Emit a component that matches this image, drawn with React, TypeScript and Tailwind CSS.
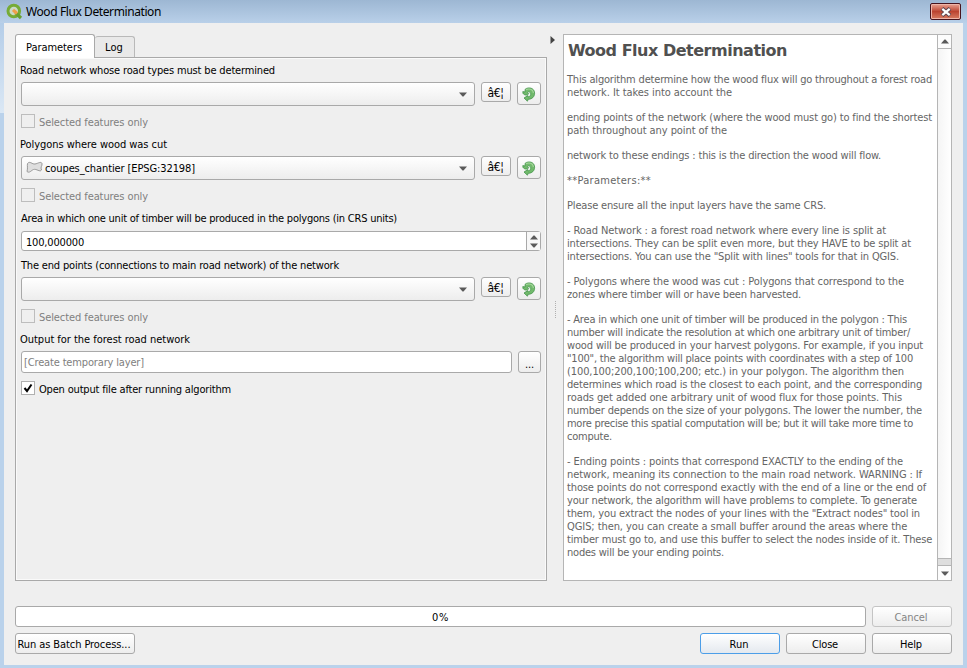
import React, { useLayoutEffect, useRef, useState, ReactNode } from "react";

/** Single line of text tracked so that it spans exactly `w` pixels. */
function Fit({ w, children, className = "" }: { w: number; children: string; className?: string }) {
  const ref = useRef<HTMLSpanElement>(null);
  const [spacing, setSpacing] = useState(0);
  useLayoutEffect(() => {
    if (ref.current) {
      const natural = ref.current.getBoundingClientRect().width;
      setSpacing((w - natural) / children.length);
    }
  }, [w, children]);
  return (
    <span ref={ref} style={{ letterSpacing: spacing }} className={`inline-block whitespace-pre ${className}`}>
      {children}
    </span>
  );
}

const raised = "border border-[#a9a9a9] rounded-[3px] bg-linear-to-b from-white to-[#ededed]";

function Down({ className = "" }: { className?: string }) {
  return (
    <svg width="8" height="5" viewBox="0 0 8 5" className={className}>
      <path d="M0 0.5H8L4.5 4.5H3.5Z" fill="#5a5a5a" />
    </svg>
  );
}

function Up() {
  return (
    <svg width="8" height="5" viewBox="0 0 8 5">
      <path d="M0 4.5H8L4.5 0.5H3.5Z" fill="#5a5a5a" />
    </svg>
  );
}

function RefreshIcon() {
  return (
    <svg width="14" height="15" viewBox="0 0 14 15" className="mt-px">
      <path
        d="M3.2 2.2C6.5 -0.3 12.6 0.8 12.6 6.2C12.6 10 9.8 12.2 6.2 12.3L5.4 14.2L2 11L5.8 8.6L6.2 10C8.4 9.4 9 7.6 8.6 6.2C8.1 4.7 6.4 4.4 5.6 5.4C5 6.4 6 6.8 6.8 6.6C5.6 8.6 2.6 8.6 1 6.4L0.8 4.6L3 5Z"
        fill="#72ba6c"
        stroke="#43934a"
        strokeWidth="0.8"
        strokeLinejoin="round"
      />
      <path d="M4 2.8C7 1 11.2 2.2 11.4 6" fill="none" stroke="#a5d79d" strokeWidth="1.1" />
    </svg>
  );
}

function Label({ w, className = "", children }: { w: number; className?: string; children: string }) {
  return (
    <div className={`h-[14px] pt-px leading-[14px] ${className}`}>
      <Fit w={w}>{children}</Fit>
    </div>
  );
}

function LayerRow({ children }: { children?: ReactNode }) {
  return (
    <div className="flex h-6 items-start">
      <div className={`flex h-6 w-[454px] items-center pr-[7px] ${raised}`}>
        {children}
        <Down className="ml-auto" />
      </div>
      <button className={`ml-[6px] flex h-5 w-[30px] items-center justify-center pr-px pt-px text-[12px] leading-none ${raised}`}>
        <Fit w={16}>â€¦</Fit>
      </button>
      <button className={`ml-[6px] flex h-[23px] w-6 items-center justify-center ${raised}`}>
        <RefreshIcon />
      </button>
    </div>
  );
}

function SelectedOnly() {
  return (
    <div className="mt-2 flex h-[14px] items-center">
      <span className="size-[14px] border border-[#bdbdbd]" />
      <span className="ml-1 mt-[3px] leading-[14px] text-[#808080]">
        <Fit w={109}>Selected features only</Fit>
      </span>
    </div>
  );
}

const help: [string, number][][] = [
  [
    ["This algorithm determine how the wood flux will go throughout a forest road", 365],
    ["network. It takes into account the", 165],
  ],
  [
    ["ending points of the network (where the wood must go) to find the shortest", 365],
    ["path throughout any point of the", 160],
  ],
  [["network to these endings : this is the direction the wood will flow.", 314]],
  [["**Parameters:**", 84]],
  [["Please ensure all the input layers have the same CRS.", 259]],
  [
    ["- Road Network : a forest road network where every line is split at", 319],
    ["intersections. They can be split even more, but they HAVE to be split at", 344],
    ["intersections. You can use the \"Split with lines\" tools for that in QGIS.", 332],
  ],
  [
    ["- Polygons where the wood was cut : Polygons that correspond to the", 337],
    ["zones where timber will or have been harvested.", 234],
  ],
  [
    ["- Area in which one unit of timber will be produced in the polygon : This", 340],
    ["number will indicate the resolution at which one arbitrary unit of timber/", 343],
    ["wood will be produced in your harvest polygons. For example, if you input", 356],
    ["\"100\", the algorithm will place points with coordinates with a step of 100", 346],
    ["(100,100;200,100;100,200; etc.) in your polygon. The algorithm then", 337],
    ["determines which road is the closest to each point, and the corresponding", 355],
    ["roads get added one arbitrary unit of wood flux for those points. This", 335],
    ["number depends on the size of your polygons. The lower the number, the", 355],
    ["more precise this spatial computation will be; but it will take more time to", 346],
    ["compute.", 45],
  ],
  [
    ["- Ending points : points that correspond EXACTLY to the ending of the", 336],
    ["network, meaning its connection to the main road network. WARNING : If", 355],
    ["those points do not correspond exactly with the end of a line or the end of", 359],
    ["your network, the algorithm will have problems to complete. To generate", 350],
    ["them, you extract the nodes of your lines with the \"Extract nodes\" tool in", 353],
    ["QGIS; then, you can create a small buffer around the areas where the", 340],
    ["timber must go to, and use this buffer to select the nodes inside of it. These", 365],
    ["nodes will be your ending points.", 157],
  ],
];

function DialogButton({ label, w, className = "" }: { label: string; w: number; className?: string }) {
  return (
    <button className={`flex h-[21px] items-center justify-center pr-[2px] pt-[2px] leading-none ${raised} ${className}`}>
      <Fit w={w}>{label}</Fit>
    </button>
  );
}

export default function App() {
  return (
    <div className="flex h-[668px] w-[967px] overflow-hidden flex-col bg-[#bad2eb] font-['DejaVu_Sans_Condensed','DejaVu_Sans',sans-serif] text-[11px] text-black [font-stretch:condensed]">
      <header className="flex h-[23px] shrink-0 items-start bg-linear-to-b from-[#9db7d3] to-[#b9d0e9] pl-[6px] pr-[6px]">
        <svg width="17" height="17" viewBox="0 0 17 17" className="mt-[3px]">
          <circle cx="7.8" cy="8" r="5.8" fill="#c9d9c4" stroke="#76ab35" strokeWidth="3" />
          <path d="M9.5 9.8L15 15" stroke="#67a02f" strokeWidth="3.2" />
          <path d="M7 6.8L11 10.5" stroke="#f0a04a" strokeWidth="3.2" />
        </svg>
        <span className="ml-[3px] mt-[4px] font-['Noto_Sans'] text-[12px] leading-4 [font-stretch:normal]">
          <Fit w={135}>Wood Flux Determination</Fit>
        </span>
        <button className="ml-auto mt-[3px] flex h-[17px] w-[31px] items-center justify-center rounded-[2px] border border-[#47141d] bg-linear-to-b from-[#e8a394] from-0% via-[#bb4330] via-50% to-[#d77c62] shadow-[inset_0_0_0_1px_#eeb5a8]">
          <svg width="12" height="10" viewBox="0 0 12 10">
            <path d="M2 1.4L10 8.6M10 1.4L2 8.6" stroke="#5b4650" strokeWidth="4" />
            <path d="M2.3 1.8L9.7 8.2M9.7 1.8L2.3 8.2" stroke="#fff" strokeWidth="2.2" />
          </svg>
        </button>
      </header>

      <div className="flex min-h-0 flex-1">
        <div className="h-[90px] w-1 shrink-0 bg-linear-to-b from-[#b4cde8] to-[#dbe8f5]" />
        <main className="mb-[3px] mr-1 flex min-h-0 flex-1 flex-col bg-[#efefef] px-[11px] pt-[11px]">
          <div className="flex h-[547px]">
            <section className="flex w-[532px] flex-col">
              <div className="z-10 -mb-px flex h-6 shrink-0 items-end">
                <div className="flex h-6 w-20 items-center justify-center rounded-t-[3px] border border-b-0 border-[#a9a9a9] bg-white pr-[2px] pt-[3px]">
                  <Fit w={56}>Parameters</Fit>
                </div>
                <div className="mb-px flex h-[21px] w-10 items-center justify-center rounded-t-[3px] border border-b-0 border-l-0 border-[#b9b9b9] bg-[#e9e9e9] pr-px pt-[3px]">
                  <Fit w={18}>Log</Fit>
                </div>
              </div>
              <div className="flex flex-1 flex-col border border-[#a9a9a9] pl-[5px] pt-[5px] shadow-[inset_1px_1px_0_#fafafa,inset_-1px_-1px_0_#fafafa]">
                <Label w={255} className="-ml-px mb-[5px]">Road network whose road types must be determined</Label>
                <LayerRow />
                <SelectedOnly />
                <Label w={147} className="-ml-px mb-[5px] mt-[9px]">Polygons where wood was cut</Label>
                <LayerRow>
                  <svg width="17" height="13" viewBox="0 0 17 13" className="-mt-px ml-1 mr-[2px]">
                    <path d="M1.5 2.5C4 -0.5 6 3.5 9 3C12 2.5 15 0 16 2.5C16.5 5 14 6 15.5 9C14 11.5 10.5 7.5 7.5 8.5C5 9.5 3.5 12.5 1 10.5C2 7 1 5 1.5 2.5Z" fill="#dedede" stroke="#999" />
                  </svg>
                  <Fit w={150} className="mt-[3px]">coupes_chantier [EPSG:32198]</Fit>
                </LayerRow>
                <SelectedOnly />
                <Label w={376} className="mb-[6px] mt-[9px]">Area in which one unit of timber will be produced in the polygons (in CRS units)</Label>
                <div className="flex h-5 w-[520px] rounded-[3px] border border-[#a9a9a9] bg-white">
                  <span className="ml-[4px] mt-[4px] leading-[14px]"><Fit w={58}>100,000000</Fit></span>
                  <div className="ml-auto flex w-[14px] flex-col items-center justify-center gap-[3px] border-l border-[#a9a9a9] bg-[#f7f7f7]">
                    <Up />
                    <Down />
                  </div>
                </div>
                <Label w={318} className="mb-[5px] mt-[7px]">The end points (connections to main road network) of the network</Label>
                <LayerRow />
                <SelectedOnly />
                <Label w={170} className="-ml-px mb-[5px] mt-[9px]">Output for the forest road network</Label>
                <div className="flex h-[22px]">
                  <div className="flex w-[491px] items-center rounded-[3px] border border-[#a9a9a9] bg-white pl-[2px] pt-[3px] text-[#808080]">
                    <Fit w={120}>[Create temporary layer]</Fit>
                  </div>
                  <button className={`ml-[6px] flex w-[23px] items-center justify-center pt-[4px] leading-none ${raised}`}>
                    <Fit w={9}>...</Fit>
                  </button>
                </div>
                <div className="mt-2 flex h-[14px] items-center">
                  <span className="flex size-[14px] items-center justify-center border border-[#b0b0b0] bg-white">
                    <svg width="10" height="10" viewBox="0 0 10 10">
                      <path d="M1.5 5L4 8L8.5 1.5" fill="none" stroke="#000" strokeWidth="2" />
                    </svg>
                  </span>
                  <span className="ml-1 mt-[3px] leading-[14px]"><Fit w={192}>Open output file after running algorithm</Fit></span>
                </div>
              </div>
            </section>

            <div className="flex w-4 flex-col pl-[3px] pt-[2px]">
              <svg width="5" height="8" viewBox="0 0 5 8">
                <path d="M0.5 0V8L5 4Z" fill="#444" />
              </svg>
              <div className="ml-[5px] mt-[257px] h-[17px] border-l border-dotted border-[#b0b0b0]" />
            </div>

            <section className="flex w-[389px] border border-[#b5b5b5] bg-white">
              <div className="flex-1 pl-[3px] text-[#656565]">
                <h1 className="ml-px mt-[6px] h-5 font-['DejaVu_Sans'] text-[16px] font-bold leading-5 text-[#505050] [font-stretch:normal]">
                  <Fit w={219}>Wood Flux Determination</Fit>
                </h1>
                <div className="mt-[12px] flex flex-col gap-3 leading-[13px]">
                  {help.map((para, i) => (
                    <div key={i}>
                      {para.map(([line, w]) => (
                        <div key={line} className="h-[13px] whitespace-nowrap"><Fit w={w}>{line}</Fit></div>
                      ))}
                    </div>
                  ))}
                </div>
              </div>
              <div className="flex w-[14px] shrink-0 flex-col border-l border-[#b5b5b5] bg-[#dedede]">
                <div className="flex h-[14px] items-center justify-center border-b border-[#b5b5b5] bg-[#fcfcfc]"><Up /></div>
                <div className="flex-1 border-b border-[#b5b5b5] bg-linear-to-r from-[#f5f5f5] to-white" />
                <div className="h-[6px]" />
                <div className="flex h-[15px] items-center justify-center border-t border-[#b5b5b5] bg-[#fcfcfc]"><Down /></div>
              </div>
            </section>
          </div>

          <div className="mt-[25px] flex gap-[6px]">
            <div className="flex h-[21px] w-[851px] items-center justify-center rounded-[3px] border border-[#a9a9a9] bg-white pt-[3px]">
              <Fit w={17}>0%</Fit>
            </div>
            <DialogButton label="Cancel" w={33} className="w-20 border-[#c4c4c4]! text-[#858585]" />
          </div>
          <div className="mt-[6px] flex gap-[6px]">
            <DialogButton label="Run as Batch Process..." w={113} className="mr-auto w-[120px]" />
            <DialogButton label="Run" w={19} className="w-20 border-[#4c9ee8]! to-[#e4e9ef]!" />
            <DialogButton label="Close" w={26} className="w-20" />
            <DialogButton label="Help" w={22} className="w-20" />
          </div>
        </main>
      </div>
    </div>
  );
}
